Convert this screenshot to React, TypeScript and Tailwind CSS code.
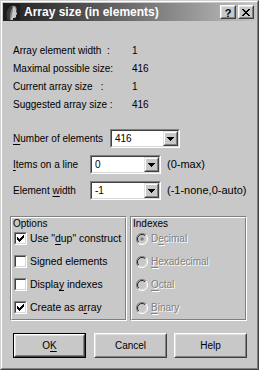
import React from "react";

const FACE = "bg-[#c8c8c8]";

function Raised({ className = "", children }: { className?: string; children?: React.ReactNode }) {
  return (
    <div className={`border border-t-white border-l-white border-b-[#404040] border-r-[#404040] ${className}`}>
      <div className={`w-full h-full border border-t-[#e0e0e0] border-l-[#e0e0e0] border-b-[#808080] border-r-[#808080] ${FACE} flex items-center justify-center`}>
        {children}
      </div>
    </div>
  );
}

function XGlyph() {
  const px: [number, number][] = [
    [0, 0], [1, 0], [6, 0], [7, 0],
    [1, 1], [2, 1], [5, 1], [6, 1],
    [2, 2], [3, 2], [4, 2], [5, 2],
    [3, 3], [4, 3],
    [2, 4], [3, 4], [4, 4], [5, 4],
    [1, 5], [2, 5], [5, 5], [6, 5],
    [0, 6], [1, 6], [6, 6], [7, 6],
  ];
  return (
    <svg width="8" height="7" viewBox="0 0 8 7" shapeRendering="crispEdges">
      {px.map(([x, y], i) => (
        <rect key={i} x={x} y={y} width="1" height="1" fill="#000" />
      ))}
    </svg>
  );
}

function Icon() {
  return (
    <svg width="16" height="16" viewBox="0 0 16 16">
      <rect width="16" height="16" fill="#1c1c1c" />
      <path d="M4 16 C3 12 3 8 5 5 C6 2 9 1 11 2 C13 3 13 6 12 8 L13 10 L12 11 L12 13 C11 14 10 14 9 14 L9 16 Z" fill="#8a8a8a" />
      <path d="M9 3 C11 3 12 5 12 7 L13 10 L12 11 L12 13 C11 14 10 14 9 14 L9 16 L7 16 C8 12 8 9 9 7 Z" fill="#c8c8c8" />
      <path d="M4 16 C2 12 2 7 5 4 C6 2 8 2 9 3 C7 5 6 9 6 16 Z" fill="#3a3a3a" />
    </svg>
  );
}

function Combo({ value, className }: { value: string; className: string }) {
  return (
    <div className={`h-[19px] border border-t-[#808080] border-l-[#808080] border-b-white border-r-white ${className}`}>
      <div className="flex h-full border border-t-[#404040] border-l-[#404040] border-b-[#d8d8d8] border-r-[#d8d8d8] bg-white">
        <div className="flex-1 pl-[3px] leading-[15px]">{value}</div>
        <div className="w-[15px] h-full border border-t-[#e0e0e0] border-l-[#e0e0e0] border-b-[#404040] border-r-[#404040]">
          <div className={`w-full h-full border border-t-white border-l-white border-b-[#808080] border-r-[#808080] ${FACE} flex items-center justify-center`}>
            <svg width="7" height="4" viewBox="0 0 7 4" shapeRendering="crispEdges">
              <path d="M0 0 H7 V1 H6 V2 H5 V3 H4 V4 H3 V3 H2 V2 H1 V1 H0 Z" fill="#000" />
            </svg>
          </div>
        </div>
      </div>
    </div>
  );
}

function U({ children }: { children: React.ReactNode }) {
  return <span className="underline underline-offset-[2px]">{children}</span>;
}

function Check({ checked, children }: { checked?: boolean; children: React.ReactNode }) {
  return (
    <div className="flex items-center h-[23px]">
      <div className="ml-[1px] w-[13px] h-[13px] border border-t-[#808080] border-l-[#808080] border-b-white border-r-white">
        <div className="w-full h-full border border-t-[#404040] border-l-[#404040] border-b-[#d8d8d8] border-r-[#d8d8d8] bg-white flex items-center justify-center">
          {checked && (
            <svg width="7" height="7" viewBox="0 0 7 7" shapeRendering="crispEdges">
              <path d="M0 2 H1 V3 H2 V4 H3 V3 H4 V2 H5 V1 H6 V0 H7 V3 H6 V4 H5 V5 H4 V6 H3 V7 H2 V6 H1 V5 H0 Z" fill="#000" />
            </svg>
          )}
        </div>
      </div>
      <div className="ml-[3px] whitespace-nowrap text-[10.4px]">{children}</div>
    </div>
  );
}

function Radio({ selected, children }: { selected?: boolean; children: React.ReactNode }) {
  return (
    <div className="flex items-center h-[23px]">
      <svg className="ml-[3px]" width="12" height="12" viewBox="0 0 12 12">
        <circle cx="6" cy="6" r="5.5" fill="#c8c8c8" />
        <path d="M10 2 A5.5 5.5 0 0 0 2 10" stroke="#808080" strokeWidth="1" fill="none" />
        <path d="M9.2 2.8 A4.5 4.5 0 0 0 2.8 9.2" stroke="#202020" strokeWidth="1" fill="none" />
        <path d="M2 10 A5.5 5.5 0 0 0 10 2" stroke="#ffffff" strokeWidth="1" fill="none" />
        <path d="M2.8 9.2 A4.5 4.5 0 0 0 9.2 2.8" stroke="#e0e0e0" strokeWidth="1" fill="none" />
        {selected && <circle cx="6" cy="6" r="1.8" fill="#808080" />}
      </svg>
      <div className="ml-[3px] whitespace-nowrap text-[#808080] [text-shadow:1px_1px_0_#fff]">{children}</div>
    </div>
  );
}

function Group({ title, children }: { title: string; children: React.ReactNode }) {
  return (
    <div className="w-[117px] h-[105px] border border-t-[#808080] border-l-[#808080] border-b-white border-r-white">
      <div className="w-full h-full border border-t-white border-l-white border-b-[#808080] border-r-[#808080] pl-[1px]">
        <div className="h-[9px] leading-[11px]">{title}</div>
        {children}
      </div>
    </div>
  );
}

export default function App() {
  const info: [string, string][] = [
    ["Array element width  :", "1"],
    ["Maximal possible size:", "416"],
    ["Current array size   :", "1"],
    ["Suggested array size :", "416"],
  ];
  return (
    <div className="w-[259px] h-[370px] border border-t-[#d0d0d0] border-l-[#d0d0d0] border-b-[#404040] border-r-[#404040] font-['Liberation_Sans',Arial,sans-serif] text-[10px] text-black">
      <div className={`w-full h-full border border-t-white border-l-white border-b-[#808080] border-r-[#808080] p-[1px] ${FACE}`}>
        {/* Title bar */}
        <div className="h-[18px] flex items-center bg-linear-to-r from-[#202020] to-[#c4c4c4] pl-[1px] pr-[2px]">
          <Icon />
          <div className="ml-[4px] text-white font-bold text-[12px] leading-[18px] whitespace-nowrap">Array size (in elements)</div>
          <div className="ml-auto flex items-center">
            <Raised className="w-[16px] h-[14px]">
              <span className="font-bold text-[11px] leading-[10px] mt-[1px]">?</span>
            </Raised>
            <Raised className="ml-[2px] w-[16px] h-[14px]">
              <XGlyph />
            </Raised>
          </div>
        </div>

        <div className="px-[7px]">
          {/* Info */}
          <div className="mt-[20px] pl-[3px]">
            {info.map(([l, v]) => (
              <div key={l} className="flex items-center h-[18px]">
                <div className="w-[119px] whitespace-pre">{l}</div>
                <div>{v}</div>
              </div>
            ))}
          </div>

          {/* Form rows */}
          <div className="mt-[16px] pl-[3px] flex flex-col gap-[7px]">
            <div className="flex items-center">
              <div className="w-[97px] whitespace-nowrap"><U>N</U>umber of elements</div>
              <Combo value="416" className="w-[70px]" />
            </div>
            <div className="flex items-center">
              <div className="w-[77px] whitespace-nowrap"><U>I</U>tems on a line</div>
              <Combo value="0" className="w-[71px]" />
              <div className="ml-[6px] whitespace-nowrap text-[11px]">(0-max)</div>
            </div>
            <div className="flex items-center">
              <div className="w-[77px] whitespace-nowrap">Element <U>w</U>idth</div>
              <Combo value="-1" className="w-[71px]" />
              <div className="ml-[6px] whitespace-nowrap text-[11px]">(-1-none,0-auto)</div>
            </div>
          </div>

          {/* Groups */}
          <div className="mt-[16px] flex gap-[3px]">
            <Group title="Options">
              <Check checked>Use "<U>d</U>up" construct</Check>
              <Check>Signed elements</Check>
              <Check>Displa<U>y</U> indexes</Check>
              <Check checked>Create as a<U>r</U>ray</Check>
            </Group>
            <Group title="Indexes">
              <Radio selected>D<U>e</U>cimal</Radio>
              <Radio><U>H</U>exadecimal</Radio>
              <Radio><U>O</U>ctal</Radio>
              <Radio><U>B</U>inary</Radio>
            </Group>
          </div>

          {/* Buttons */}
          <div className="mt-[12px] pl-[3px] flex">
            <div className="w-[73px] h-[25px] border border-black">
              <Raised className="w-full h-full">
                <span>O<U>K</U></span>
              </Raised>
            </div>
            <Raised className="ml-[8px] w-[73px] h-[25px]">Cancel</Raised>
            <Raised className="ml-[7px] w-[73px] h-[25px]">Help</Raised>
          </div>
        </div>
      </div>
    </div>
  );
}
